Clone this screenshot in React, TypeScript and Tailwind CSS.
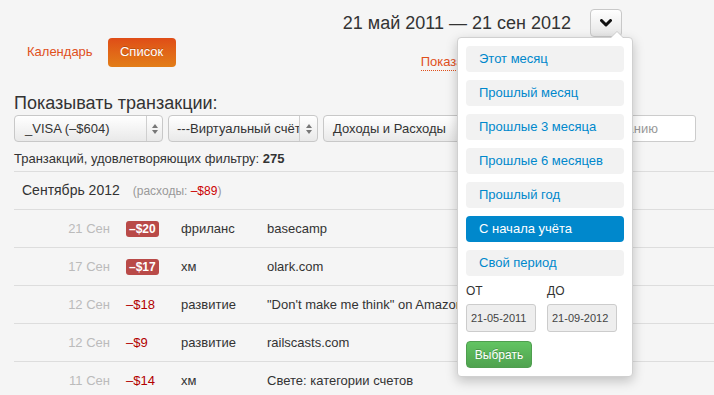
import React from "react";

interface Row {
  date: string;
  amount: string;
  badge: boolean;
  category: string;
  description: string;
}

const rows: Row[] = [
  { date: "21 Сен", amount: "–$20", badge: true, category: "фриланс", description: "basecamp" },
  { date: "17 Сен", amount: "–$17", badge: true, category: "хм", description: "olark.com" },
  { date: "12 Сен", amount: "–$18", badge: false, category: "развитие", description: "\"Don't make me think\" on Amazon" },
  { date: "12 Сен", amount: "–$9", badge: false, category: "развитие", description: "railscasts.com" },
  { date: "11 Сен", amount: "–$14", badge: false, category: "хм", description: "Свете: категории счетов" },
];

const periods = [
  "Этот месяц",
  "Прошлый месяц",
  "Прошлые 3 месяца",
  "Прошлые 6 месяцев",
  "Прошлый год",
  "С начала учёта",
  "Свой период",
];

const SelectBox = ({ label, width, pad, arrowW }: { label: string; width: string; pad: string; arrowW: string }) => (
  <div
    className={`flex h-[27px] ${width} items-center overflow-hidden rounded-[4px] border border-[#c8c8c8] bg-linear-to-b from-white to-[#e9e9e9] shadow-[inset_0_1px_0_rgba(255,255,255,0.8)]`}
  >
    <span className={`flex-1 overflow-hidden whitespace-nowrap ${pad} text-[13px] text-[#333]`}>{label}</span>
    <span className={`flex h-full ${arrowW} flex-col items-center justify-center gap-[2px] border-l border-[#cfcfcf]`}>
      <span className="h-0 w-0 border-x-[3px] border-b-[4px] border-x-transparent border-b-[#777]" />
      <span className="h-0 w-0 border-x-[3px] border-t-[4px] border-x-transparent border-t-[#777]" />
    </span>
  </div>
);

export default function App() {
  return (
    <div className="relative h-[395px] w-[714px] overflow-hidden bg-[#f5f5f5] font-['Liberation_Sans',Arial,sans-serif] text-[#333]">
      {/* date range header */}
      <div className="flex h-[37px] items-center justify-end gap-[19px] pr-[92px] pt-[8px]">
        <span className="text-[18px] leading-[22px] text-[#333]">21 май 2011 — 21 сен 2012</span>
        <button className="flex h-[28px] w-[32px] items-center justify-center rounded-[4px] border border-[#c8c8c8] bg-linear-to-b from-white to-[#e6e6e6]">
          <svg width="12" height="8" viewBox="0 0 12 8">
            <path d="M1.5 1.5 L6 6 L10.5 1.5" fill="none" stroke="#111" strokeWidth="3" strokeLinecap="round" strokeLinejoin="round" />
          </svg>
        </button>
      </div>

      {/* view switch */}
      <div className="flex h-[30px] items-center pl-[27px]">
        <span className="text-[13px] text-[#e0501c]">Календарь</span>
        <button className="ml-[15px] h-[29px] w-[68px] rounded-[4px] bg-linear-to-b from-[#df4c17] to-[#e27d18] text-[13px] text-white [text-shadow:0_-1px_0_rgba(0,0,0,0.2)]">
          Список
        </button>
        <span className="ml-[245px] mt-[17px] self-start border-b border-dotted border-[#e0501c] text-[13px] leading-[16px] text-[#e0501c]">
          Показать все
        </span>
      </div>

      <div className="mt-[25px] pl-[14px] text-[18px] leading-[22px]">Показывать транзакции:</div>

      {/* filters */}
      <div className="mt-[1px] flex items-center gap-[5px] pl-[14px]">
        <SelectBox label="_VISA (–$604)" width="w-[149px]" pad="pl-[10px]" arrowW="w-[16px]" />
        <SelectBox label="---Виртуальный счёт" width="w-[150px]" pad="pl-[8px]" arrowW="w-[18px]" />
        <SelectBox label="Доходы и Расходы" width="w-[204px]" pad="pl-[9px]" arrowW="w-[18px]" />
        <div className="flex h-[27px] w-[164px] items-center rounded-[3px] border border-[#ccc] bg-white pl-[8px] text-[13px] text-[#999]">
          Поиск по описанию
        </div>
      </div>

      <div className="ml-[14px] mt-[9px] border-b border-[#ddd] pb-[4px] text-[13px] leading-[16px]">
        Транзакций, удовлетворяющих фильтру: <b>275</b>
      </div>

      {/* month group */}
      <div className="ml-[14px] flex h-[38px] items-center border-b border-[#ddd] pl-[8px]">
        <span className="text-[14px]">Сентябрь 2012</span>
        <span className="ml-[13px] text-[12px] text-[#999]">
          (расходы: <span className="text-[#c00]">–$89</span>)
        </span>
      </div>

      {rows.map((r, i) => (
        <div key={i} className="ml-[14px] flex h-[38px] items-center border-b border-[#ddd] text-[13px]">
          <span className="w-[96px] text-right text-[#bbb]">{r.date}</span>
          <span className="ml-[16px] w-[55px]">
            {r.badge ? (
              <span className="inline-block rounded-[3px] bg-[#b94a48] px-[3px] text-[12px] font-bold leading-[16px] text-white">
                {r.amount}
              </span>
            ) : (
              <span className="text-[#b20000]">{r.amount}</span>
            )}
          </span>
          <span className="w-[86px]">{r.category}</span>
          <span className="whitespace-nowrap">{r.description}</span>
        </div>
      ))}

      {/* period dropdown */}
      <div className="absolute left-[457px] top-[37px] flex h-[340px] w-[176px] flex-col rounded-[4px] border border-[#d0d0d0] bg-white p-[8px] shadow-[0_4px_12px_rgba(0,0,0,0.22)]">
        <span className="absolute -top-[7px] left-[152px] h-0 w-0 border-x-[7px] border-b-[7px] border-x-transparent border-b-[#ccc]" />
        <span className="absolute -top-[6px] left-[153px] h-0 w-0 border-x-[6px] border-b-[6px] border-x-transparent border-b-white" />
        <div className="flex flex-col gap-[8px]">
          {periods.map((p) => (
            <div
              key={p}
              className={
                p === "С начала учёта"
                  ? "flex h-[26px] items-center rounded-[4px] bg-[#0088cc] px-[13px] text-[13px] text-white"
                  : "flex h-[26px] items-center rounded-[4px] bg-[#f2f2f2] px-[13px] text-[13px] text-[#0088cc]"
              }
            >
              {p}
            </div>
          ))}
        </div>
        <div className="mt-[7px] grid grid-cols-[70px_70px] gap-x-[11px] text-[12px] leading-[16px]">
          <span>ОТ</span>
          <span>ДО</span>
          <div className="mt-[5px] flex h-[28px] items-center rounded-[3px] border border-[#ccc] bg-[#eee] pl-[4px] text-[11px] text-[#444]">
            21-05-2011
          </div>
          <div className="mt-[5px] flex h-[28px] items-center rounded-[3px] border border-[#ccc] bg-[#eee] pl-[4px] text-[11px] text-[#444]">
            21-09-2012
          </div>
        </div>
        <button className="mt-[9px] h-[28px] w-[66px] rounded-[4px] border border-[#4f9e4f] bg-linear-to-b from-[#62c462] to-[#4fa24f] text-[12px] text-white [text-shadow:0_-1px_0_rgba(0,0,0,0.2)]">
          Выбрать
        </button>
      </div>
    </div>
  );
}
